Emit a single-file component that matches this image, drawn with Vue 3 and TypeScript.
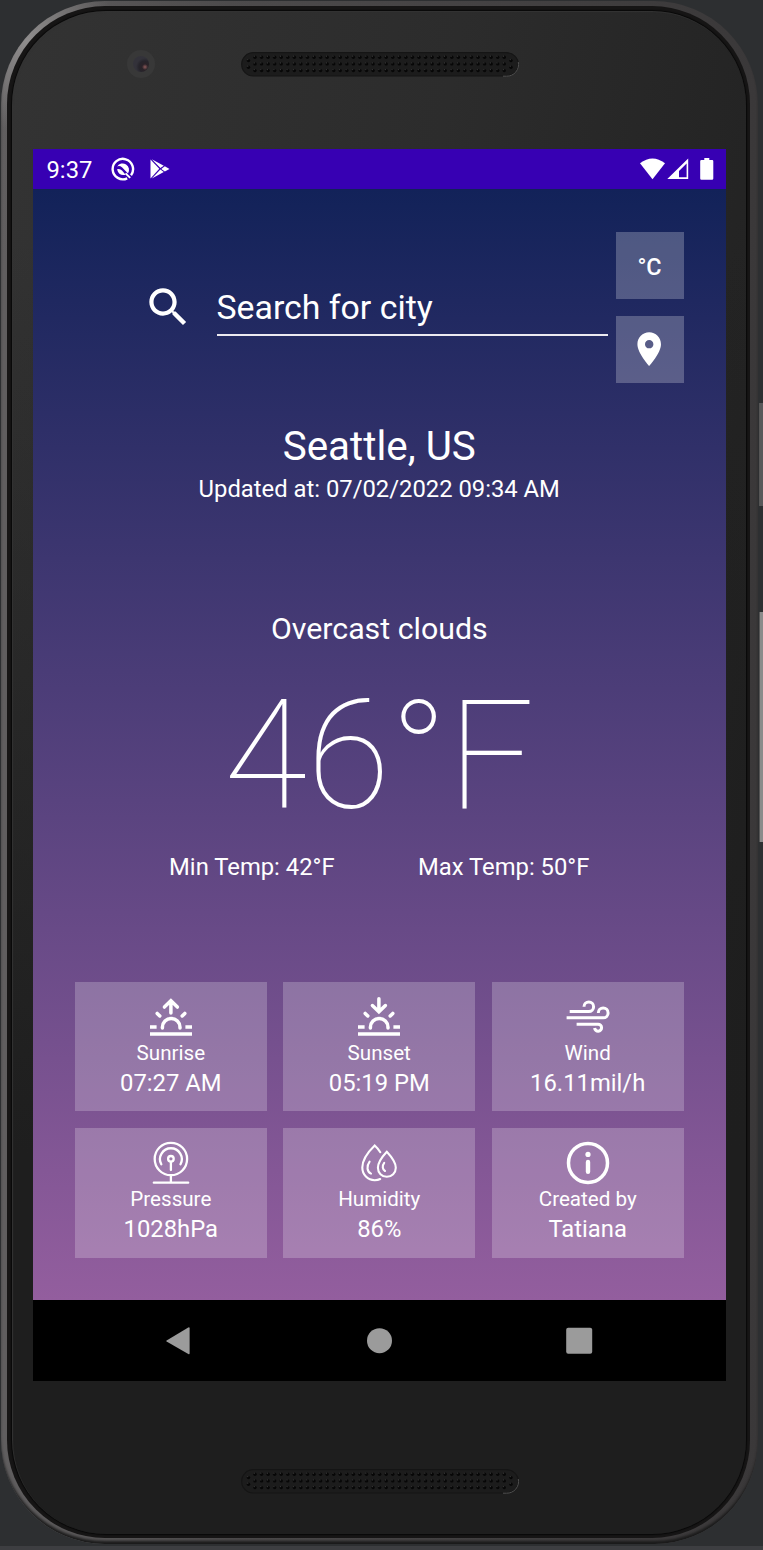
<script setup lang="ts">
interface Card {
  icon: string
  name: string
  value: string
}

const cards: Card[] = [
  { icon: 'sunrise', name: 'Sunrise', value: '07:27 AM' },
  { icon: 'sunset', name: 'Sunset', value: '05:19 PM' },
  { icon: 'wind', name: 'Wind', value: '16.11mil/h' },
  { icon: 'pressure', name: 'Pressure', value: '1028hPa' },
  { icon: 'humidity', name: 'Humidity', value: '86%' },
  { icon: 'info', name: 'Created by', value: 'Tatiana' },
]

const grilles: string[] = ['top', 'bottom']
const holes: { x: number; y: number }[] = []
for (let c = 0; c < 39; c++) {
  for (const y of [5.2, 11.9, 18.6]) holes.push({ x: 14 + c * 6.56, y })
}
for (const x of [7.5, 270]) {
  for (const y of [8.6, 15.2]) holes.push({ x, y })
}
</script>

<template>
  <div class="stage">
    <div class="side-key power"></div>
    <div class="side-key volume"></div>
    <div class="phone">
      <div class="gasket">
        <div class="face">
          <div class="camera"><div class="lens"></div></div>
          <svg v-for="g in grilles" :key="g" class="grille" :class="g" viewBox="0 0 278 25">
            <rect x="0.7" y="0.7" width="276.6" height="23.3" rx="11.6" class="grille-bed" />
            <path d="M262 24.2H265.5A11.7 11.7 0 0 0 277.3 10" class="grille-shine" />
            <g v-for="(h, i) in holes" :key="i">
              <circle :cx="h.x" :cy="h.y" r="1.7" class="hole" />
              <circle :cx="h.x - 0.7" :cy="h.y - 1" r="0.6" class="glint" />
            </g>
          </svg>

          <div class="screen">
            <div class="status">
              <span class="clock">9:37</span>
              <svg class="st-q" viewBox="0 0 24 24">
                <path d="M20 18.2A10.2 10.2 0 1 0 16.2 21.3" fill="none" stroke="#fff" stroke-width="2.4" />
                <path d="M6.2 9.4A6.4 6.4 0 1 1 17 16.4L11.2 10.4Q8.6 8.4 6.2 9.4z" fill="#fff" />
                <path d="M6 12.2Q9 11.2 11 13.6L14.6 17.8Q8 19.4 6 12.2z" fill="#fff" />
                <path d="M14.6 16.4L19.2 20.9" stroke="#fff" stroke-width="2" />
              </svg>
              <svg class="st-play" viewBox="0 0 20 20">
                <path d="M0.5 0.4L9.3 9.7L0.5 19.4z" fill="#fff" />
                <path d="M1.8 0.2L13.8 6.7L10.4 9.1z M1.8 19.6L13.8 13L10.4 10.5z" fill="#fff" />
                <path d="M11.3 9.9L14.8 7.2L19.5 9.9L14.8 12.6z" fill="#fff" />
              </svg>
              <svg class="st-wifi" viewBox="0 0 25 22"><path d="M0 5.3Q12.5-4.5 25 5.3L12.5 21.3z" fill="#fff" /></svg>
              <svg class="st-cell" viewBox="0 0 22 22">
                <path d="M21.2 0.6V21H0.3z M19.6 5.4L12 13V19.2H19.6z" fill="#fff" fill-rule="evenodd" />
              </svg>
              <svg class="st-batt" viewBox="0 0 14 22">
                <path d="M4.3 0H9.3V2H12.2Q13.3 2 13.3 3.2V20.5Q13.3 21.8 12 21.8H1.4Q.2 21.8.2 20.5V3.2Q.2 2 1.4 2H4.3z" fill="#fff" />
              </svg>
            </div>

            <main class="content">
              <header class="search">
                <svg class="magnifier" viewBox="0 0 24 24">
                  <path d="M15.5 14h-.79l-.28-.27C15.41 12.59 16 11.11 16 9.5 16 5.91 13.09 3 9.5 3S3 5.91 3 9.5 5.91 16 9.5 16c1.61 0 3.09-.59 4.23-1.57l.27.28v.79l5 4.99L20.49 19l-4.99-5zm-6 0C7.01 14 5 11.99 5 9.5S7.01 5 9.5 5 14 7.01 14 9.5 11.99 14 9.5 14z" fill="#fff" />
                </svg>
                <div class="field">Search for city</div>
                <div class="buttons">
                  <div class="btn unit">°C</div>
                  <div class="btn">
                    <svg class="pin" viewBox="0 0 24 24">
                      <path d="M12 2C8.13 2 5 5.13 5 9c0 5.25 7 13 7 13s7-7.75 7-13c0-3.87-3.13-7-7-7zm0 9.5c-1.38 0-2.5-1.12-2.5-2.5s1.12-2.5 2.5-2.5 2.5 1.12 2.5 2.5-1.12 2.5-2.5 2.5z" fill="#fff" />
                    </svg>
                  </div>
                </div>
              </header>

              <div class="city">Seattle, US</div>
              <div class="updated">Updated at: 07/02/2022 09:34 AM</div>
              <div class="sky">Overcast clouds</div>
              <div class="temp">46°F</div>
              <div class="range"><span>Min Temp: 42°F</span><span>Max Temp: 50°F</span></div>

              <section class="cards">
                <article v-for="c in cards" :key="c.name" class="card">
                  <svg class="icon" viewBox="0 0 42 42">
                    <g v-if="c.icon === 'sunrise' || c.icon === 'sunset'" stroke-width="3.5">
                      <path v-if="c.icon === 'sunrise'" d="M20.9 17V5M14.4 11.1L20.9 4.8L27.4 11.1" />
                      <path v-else d="M20.9 2.8V15M14.4 9.5L20.9 15.8L27.4 9.5" />
                      <path d="M12.4 32V31.2a8.8 8.8 0 0 1 17.6 0V32" />
                      <path d="M7.2 17.4L9.8 20M34.8 17.4L32.2 20" />
                      <path d="M0 31.1H6.6M35.4 31.1H42M0 38H42" stroke-linecap="butt" />
                    </g>
                    <g v-else-if="c.icon === 'wind'" stroke-width="3" stroke-linecap="butt">
                      <path d="M2.7 15.5H21.8A4.8 4.8 0 1 0 17 10.7" />
                      <path d="M-.4 21.8H36.2A4.9 4.9 0 1 0 31.3 16.9" />
                      <path d="M9.6 28.2H31A3.5 3.5 0 1 1 27.6 32" />
                    </g>
                    <g v-else-if="c.icon === 'pressure'" stroke-width="2.3">
                      <circle cx="20.9" cy="17" r="16.2" />
                      <path d="M11.3 22.3A10.9 10.9 0 1 1 30.5 22.3" />
                      <circle cx="20.9" cy="16.8" r="2.8" />
                      <path d="M20.9 19.8V28M20.9 33.5V40M3.8 40.7H38.2" />
                    </g>
                    <g v-else-if="c.icon === 'humidity'" stroke-width="2.1">
                      <path d="M22.3 10.2Q20 6.5 16.7 3.5C10.5 9.5 4.3 18.5 4.3 25.6C4.3 32.8 9.8 38.2 16.7 38.2Q20 38.2 22.2 37" />
                      <path d="M28.8 9.8C24.4 14.5 19.9 20.5 19.9 25.8C19.9 31 23.8 34.8 28.8 34.8S37.8 31 37.8 25.8C37.8 20.5 33.2 14.5 28.8 9.8z" />
                      <path d="M11.6 19.6C8 24.5 9.2 29.8 13 31.6M26.2 20.8C23.8 23.8 24.6 27.6 27 29" />
                    </g>
                    <g v-else>
                      <circle cx="21" cy="20.9" r="19.5" stroke-width="3.5" />
                      <circle cx="21" cy="12.4" r="2.6" fill="#fff" stroke="none" />
                      <path d="M21 19.9V29.7" stroke-width="4.4" />
                    </g>
                  </svg>
                  <div class="name">{{ c.name }}</div>
                  <div class="value">{{ c.value }}</div>
                </article>
              </section>
            </main>

            <nav class="navbar">
              <svg viewBox="0 0 30 30"><path d="M26.6 2.2V27.2Q26.6 28.6 25.3 27.9L3.6 15.6Q2.6 15 3.6 14.4L25.3 1.5Q26.6 .8 26.6 2.2z" fill="#9b9b9b" /></svg>
              <svg viewBox="0 0 30 30"><circle cx="15.5" cy="14.7" r="12.5" fill="#9b9b9b" /></svg>
              <svg viewBox="0 0 30 30"><rect x="1.2" y="1.7" width="26" height="26" rx="2" fill="#9b9b9b" /></svg>
            </nav>
          </div>
        </div>
      </div>
    </div>
  </div>
</template>

<style>
body {
  margin: 0;
  background: #2d2f31;
}
</style>

<style scoped>
.stage {
  position: relative;
  box-sizing: border-box;
  width: 763px;
  height: 1550px;
  padding: 1px 0 0 1px;
  overflow: hidden;
  background: linear-gradient(#2d2f31 0 1546px, #3d3e41 1546px);
  font-family: Roboto, "Liberation Sans", sans-serif;
  color: #fff;
}
.side-key {
  position: absolute;
  right: 0;
  width: 4px;
  box-sizing: border-box;
  border-left: 1px solid #555;
  background: #8b8b8b;
}
.power { top: 403px; height: 103px; background: #58585a; }
.volume { top: 612px; height: 230px; }
.phone {
  box-sizing: border-box;
  width: 757px;
  height: 1543px;
  padding: 5px 8px 6px 6px;
  border-radius: 104px;
  background:
    radial-gradient(circle at 26px 40px, #8f8d8d 0, rgba(110, 108, 108, 0) 90px),
    linear-gradient(90deg, #605e5f 0, #4d4b4c 30%, #3a3839 100%);
  box-shadow: inset 0 -4px 3px -1px #191919;
}
.gasket {
  box-sizing: border-box;
  height: 1532px;
  padding: 5px 4px 4px 5px;
  border-radius: 98px;
  background: #161515;
}
.face {
  position: relative;
  box-sizing: border-box;
  height: 1523px;
  padding: 138px 0 0 21px;
  border-radius: 94px;
  background:
    linear-gradient(180deg, rgba(30, 30, 30, 0) 0, rgba(30, 30, 30, 0) 15%, #1e1e1e 75%),
    linear-gradient(100deg, #333 0, #2c2c2c 45%, #1f1f1f 95%);
  box-shadow: 0 0 1px 1px #080808, inset 1px 1px 1px #333;
}
.camera {
  position: absolute;
  left: 115px;
  top: 39px;
  width: 28px;
  height: 28px;
  display: grid;
  place-items: center;
  border-radius: 50%;
  background: #383838;
}
.lens {
  width: 16px;
  height: 16px;
  border-radius: 50%;
  background: radial-gradient(circle at 12px 11px, #8b5a5a 0, #2a2228 3px, #26242b 6px, #33323a 9px);
}
.grille {
  position: absolute;
  left: 228.5px;
  width: 278px;
  height: 25px;
}
.grille.top { top: 41px; }
.grille.bottom { top: 1458px; }
.grille-bed { fill: #1c1c1c; stroke: #151515; stroke-width: 1.2; }
.grille-shine { fill: none; stroke: #505050; stroke-width: 1; }
.hole { fill: #070707; }
.glint { fill: #3c3c3c; }
.screen {
  width: 693px;
  height: 1232px;
  display: flex;
  flex-direction: column;
}
.status {
  box-sizing: border-box;
  height: 40px;
  padding: 0 12.5px 0 13.5px;
  display: flex;
  align-items: center;
  background: #3700b3;
}
.clock { width: 64px; padding-top: 2px; font-size: 23.8px; line-height: 40px; }
.st-q { width: 24px; height: 24px; }
.st-play { width: 20px; height: 20px; margin-left: 15.5px; }
.st-wifi { width: 25px; height: 22px; margin-left: auto; }
.st-cell { width: 22px; height: 22px; margin-left: 2px; }
.st-batt { width: 14px; height: 22px; margin-left: 11px; }
.content {
  box-sizing: border-box;
  height: 1111px;
  padding: 43px 42.5px 0 42px;
  text-align: center;
  background: linear-gradient(#122259, #935e9e);
}
.search {
  height: 151px;
  display: flex;
  justify-content: flex-end;
  align-items: flex-start;
}
.magnifier { width: 50.5px; height: 50.5px; margin: 50px 23px 0 0; }
.field {
  box-sizing: border-box;
  width: 391px;
  height: 55px;
  margin: 49px 8px 0 0;
  border-bottom: 2px solid #eceaf1;
  font-size: 33.85px;
  line-height: 54px;
  text-align: left;
}
.buttons { display: flex; flex-direction: column; gap: 17px; }
.btn {
  box-sizing: border-box;
  width: 68px;
  height: 67px;
  display: grid;
  place-items: center;
  background: rgba(255, 255, 255, 0.24);
}
.unit { padding-top: 2px; font-size: 23.4px; font-weight: 500; }
.pin { width: 40.4px; height: 40.4px; }
.city { margin-top: 39px; font-size: 40.4px; line-height: 50px; }
.updated { margin-top: 2px; font-size: 23.8px; line-height: 30px; }
.sky { margin-top: 105px; font-size: 30.3px; line-height: 40px; }
.temp { margin-top: 17px; font-size: 151.6px; font-weight: 100; line-height: 180px; }
.range {
  margin-top: 6px;
  display: flex;
  justify-content: center;
  gap: 83.5px;
  font-size: 23.8px;
  line-height: 30px;
}
.cards {
  margin-top: 100px;
  display: grid;
  grid-template-columns: repeat(3, 1fr);
  gap: 17px 16.8px;
}
.card {
  box-sizing: border-box;
  height: 129.3px;
  padding-top: 14px;
  background: rgba(255, 255, 255, 0.22);
}
.icon {
  display: block;
  width: 42px;
  height: 42px;
  margin: 0 auto;
  overflow: visible;
  fill: none;
  stroke: #fff;
  stroke-linecap: round;
}
.name { font-size: 20.6px; line-height: 30px; }
.value { font-size: 23.8px; line-height: 30px; }
.navbar {
  box-sizing: border-box;
  height: 81px;
  padding: 0 131px 0 130px;
  display: flex;
  align-items: center;
  justify-content: space-between;
  background: #000;
}
.navbar svg { width: 30px; height: 30px; }
</style>
